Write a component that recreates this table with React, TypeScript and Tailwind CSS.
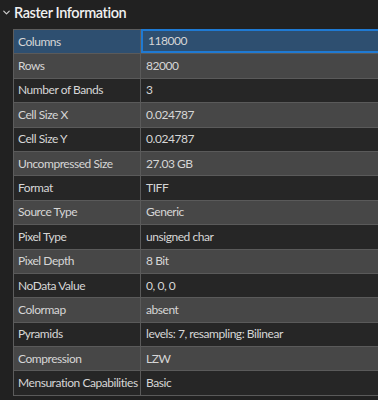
import { ChevronDown } from 'lucide-react';

const ROWS: [string, string][] = [
  ['Columns', '118000'],
  ['Rows', '82000'],
  ['Number of Bands', '3'],
  ['Cell Size X', '0.024787'],
  ['Cell Size Y', '0.024787'],
  ['Uncompressed Size', '27.03 GB'],
  ['Format', 'TIFF'],
  ['Source Type', 'Generic'],
  ['Pixel Type', 'unsigned char'],
  ['Pixel Depth', '8 Bit'],
  ['NoData Value', '0, 0, 0'],
  ['Colormap', 'absent'],
  ['Pyramids', 'levels: 7, resampling: Bilinear'],
  ['Compression', 'LZW'],
  ['Mensuration Capabilities', 'Basic'],
];

export default function App() {
  return (
    <div
      className="w-[378px] h-[400px] overflow-hidden bg-[#212121] text-[#d6d6d6]"
      style={{ fontFamily: 'Lato, "Open Sans", sans-serif' }}
    >
      {/* Header */}
      <div className="h-[29px] flex items-center gap-[2px] pl-[1px] pb-[4px]">
        <ChevronDown className="w-[11px] h-[11px] text-[#cfcfcf]" strokeWidth={2.6} />
        <span className="text-[14.5px] font-semibold tracking-[-0.4px] text-[#f0f0f0]">Raster Information</span>
      </div>

      {/* Table */}
      <div className="ml-[13px] border-l border-t border-[#5c5c5c] w-[380px]">
        {ROWS.map(([label, value], i) => {
          const selected = i === 0;
          const rowBg = selected ? 'bg-[#2e4f70]' : i % 2 === 1 ? 'bg-[#474747]' : 'bg-[#262626]';
          return (
            <div
              key={label}
              className={`flex h-[24.4px] border-b border-[#5a5a5a] text-[12px] tracking-[-0.45px] ${rowBg}`}
            >
              <div className="w-[127px] shrink-0 border-r border-[#5a5a5a] pl-[4px] flex items-center whitespace-nowrap">
                {label}
              </div>
              <div
                className={`flex-1 flex items-center pl-[5px] whitespace-nowrap ${
                  selected ? 'border-2 border-[#1f7ad3] -mt-[1px] pl-[4px]' : ''
                }`}
              >
                {value}
              </div>
            </div>
          );
        })}
      </div>
    </div>
  );
}
